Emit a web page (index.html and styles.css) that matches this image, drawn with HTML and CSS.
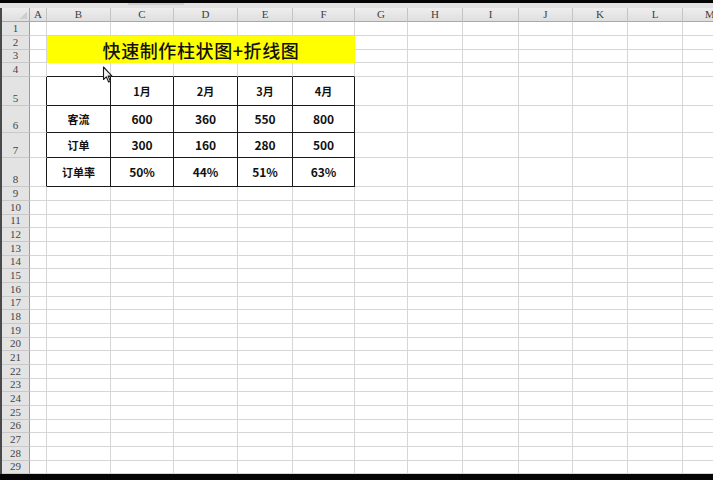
FILE: index.html
```
<!DOCTYPE html>
<html lang="zh">
<head>
<meta charset="utf-8">
<title>快速制作柱状图+折线图</title>
<link rel="stylesheet" href="styles.css">
</head>
<body>
<div class="topbar"><span class="tab"></span></div>
<div class="sheet">
  <div class="ch corner"></div><div class="ch">A</div><div class="ch">B</div><div class="ch">C</div><div class="ch">D</div><div class="ch">E</div><div class="ch">F</div><div class="ch">G</div><div class="ch">H</div><div class="ch">I</div><div class="ch">J</div><div class="ch">K</div><div class="ch">L</div><div class="ch">M</div>

  <div class="rh">1</div><i class="c"></i><i class="c"></i><i class="c"></i><i class="c"></i><i class="c"></i><i class="c"></i><i class="c"></i><i class="c"></i><i class="c"></i><i class="c"></i><i class="c"></i><i class="c"></i><i class="c"></i>

  <div class="rh">2</div><i class="c"></i><div class="title">快速制作柱状图+折线图</div><i class="c"></i><i class="c"></i><i class="c"></i><i class="c"></i><i class="c"></i><i class="c"></i><i class="c"></i>

  <div class="rh">3</div><i class="c"></i><i class="c"></i><i class="c"></i><i class="c"></i><i class="c"></i><i class="c"></i><i class="c"></i><i class="c"></i>

  <div class="rh">4</div><i class="c"></i><i class="c bt"></i><i class="c bt"></i><i class="c bt"></i><i class="c bt"></i><i class="c bt"></i><i class="c"></i><i class="c"></i><i class="c"></i><i class="c"></i><i class="c"></i><i class="c"></i><i class="c"></i>

  <div class="rh">5</div><i class="c bl"></i><div class="t"></div><div class="t">1月</div><div class="t">2月</div><div class="t">3月</div><div class="t">4月</div><i class="c"></i><i class="c"></i><i class="c"></i><i class="c"></i><i class="c"></i><i class="c"></i><i class="c"></i>

  <div class="rh">6</div><i class="c bl"></i><div class="t">客流</div><div class="t n">600</div><div class="t n">360</div><div class="t n">550</div><div class="t n">800</div><i class="c"></i><i class="c"></i><i class="c"></i><i class="c"></i><i class="c"></i><i class="c"></i><i class="c"></i>

  <div class="rh">7</div><i class="c bl"></i><div class="t">订单</div><div class="t n">300</div><div class="t n">160</div><div class="t n">280</div><div class="t n">500</div><i class="c"></i><i class="c"></i><i class="c"></i><i class="c"></i><i class="c"></i><i class="c"></i><i class="c"></i>

  <div class="rh">8</div><i class="c bl"></i><div class="t">订单率</div><div class="t n">50%</div><div class="t n">44%</div><div class="t n">51%</div><div class="t n">63%</div><i class="c"></i><i class="c"></i><i class="c"></i><i class="c"></i><i class="c"></i><i class="c"></i><i class="c"></i>

  <div class="rh">9</div><i class="c"></i><i class="c"></i><i class="c"></i><i class="c"></i><i class="c"></i><i class="c"></i><i class="c"></i><i class="c"></i><i class="c"></i><i class="c"></i><i class="c"></i><i class="c"></i><i class="c"></i>
  <div class="rh">10</div><i class="c"></i><i class="c"></i><i class="c"></i><i class="c"></i><i class="c"></i><i class="c"></i><i class="c"></i><i class="c"></i><i class="c"></i><i class="c"></i><i class="c"></i><i class="c"></i><i class="c"></i>
  <div class="rh">11</div><i class="c"></i><i class="c"></i><i class="c"></i><i class="c"></i><i class="c"></i><i class="c"></i><i class="c"></i><i class="c"></i><i class="c"></i><i class="c"></i><i class="c"></i><i class="c"></i><i class="c"></i>
  <div class="rh">12</div><i class="c"></i><i class="c"></i><i class="c"></i><i class="c"></i><i class="c"></i><i class="c"></i><i class="c"></i><i class="c"></i><i class="c"></i><i class="c"></i><i class="c"></i><i class="c"></i><i class="c"></i>
  <div class="rh">13</div><i class="c"></i><i class="c"></i><i class="c"></i><i class="c"></i><i class="c"></i><i class="c"></i><i class="c"></i><i class="c"></i><i class="c"></i><i class="c"></i><i class="c"></i><i class="c"></i><i class="c"></i>
  <div class="rh">14</div><i class="c"></i><i class="c"></i><i class="c"></i><i class="c"></i><i class="c"></i><i class="c"></i><i class="c"></i><i class="c"></i><i class="c"></i><i class="c"></i><i class="c"></i><i class="c"></i><i class="c"></i>
  <div class="rh">15</div><i class="c"></i><i class="c"></i><i class="c"></i><i class="c"></i><i class="c"></i><i class="c"></i><i class="c"></i><i class="c"></i><i class="c"></i><i class="c"></i><i class="c"></i><i class="c"></i><i class="c"></i>
  <div class="rh">16</div><i class="c"></i><i class="c"></i><i class="c"></i><i class="c"></i><i class="c"></i><i class="c"></i><i class="c"></i><i class="c"></i><i class="c"></i><i class="c"></i><i class="c"></i><i class="c"></i><i class="c"></i>
  <div class="rh">17</div><i class="c"></i><i class="c"></i><i class="c"></i><i class="c"></i><i class="c"></i><i class="c"></i><i class="c"></i><i class="c"></i><i class="c"></i><i class="c"></i><i class="c"></i><i class="c"></i><i class="c"></i>
  <div class="rh">18</div><i class="c"></i><i class="c"></i><i class="c"></i><i class="c"></i><i class="c"></i><i class="c"></i><i class="c"></i><i class="c"></i><i class="c"></i><i class="c"></i><i class="c"></i><i class="c"></i><i class="c"></i>
  <div class="rh">19</div><i class="c"></i><i class="c"></i><i class="c"></i><i class="c"></i><i class="c"></i><i class="c"></i><i class="c"></i><i class="c"></i><i class="c"></i><i class="c"></i><i class="c"></i><i class="c"></i><i class="c"></i>
  <div class="rh">20</div><i class="c"></i><i class="c"></i><i class="c"></i><i class="c"></i><i class="c"></i><i class="c"></i><i class="c"></i><i class="c"></i><i class="c"></i><i class="c"></i><i class="c"></i><i class="c"></i><i class="c"></i>
  <div class="rh">21</div><i class="c"></i><i class="c"></i><i class="c"></i><i class="c"></i><i class="c"></i><i class="c"></i><i class="c"></i><i class="c"></i><i class="c"></i><i class="c"></i><i class="c"></i><i class="c"></i><i class="c"></i>
  <div class="rh">22</div><i class="c"></i><i class="c"></i><i class="c"></i><i class="c"></i><i class="c"></i><i class="c"></i><i class="c"></i><i class="c"></i><i class="c"></i><i class="c"></i><i class="c"></i><i class="c"></i><i class="c"></i>
  <div class="rh">23</div><i class="c"></i><i class="c"></i><i class="c"></i><i class="c"></i><i class="c"></i><i class="c"></i><i class="c"></i><i class="c"></i><i class="c"></i><i class="c"></i><i class="c"></i><i class="c"></i><i class="c"></i>
  <div class="rh">24</div><i class="c"></i><i class="c"></i><i class="c"></i><i class="c"></i><i class="c"></i><i class="c"></i><i class="c"></i><i class="c"></i><i class="c"></i><i class="c"></i><i class="c"></i><i class="c"></i><i class="c"></i>
  <div class="rh">25</div><i class="c"></i><i class="c"></i><i class="c"></i><i class="c"></i><i class="c"></i><i class="c"></i><i class="c"></i><i class="c"></i><i class="c"></i><i class="c"></i><i class="c"></i><i class="c"></i><i class="c"></i>
  <div class="rh">26</div><i class="c"></i><i class="c"></i><i class="c"></i><i class="c"></i><i class="c"></i><i class="c"></i><i class="c"></i><i class="c"></i><i class="c"></i><i class="c"></i><i class="c"></i><i class="c"></i><i class="c"></i>
  <div class="rh">27</div><i class="c"></i><i class="c"></i><i class="c"></i><i class="c"></i><i class="c"></i><i class="c"></i><i class="c"></i><i class="c"></i><i class="c"></i><i class="c"></i><i class="c"></i><i class="c"></i><i class="c"></i>
  <div class="rh">28</div><i class="c"></i><i class="c"></i><i class="c"></i><i class="c"></i><i class="c"></i><i class="c"></i><i class="c"></i><i class="c"></i><i class="c"></i><i class="c"></i><i class="c"></i><i class="c"></i><i class="c"></i>
  <div class="rh">29</div><i class="c"></i><i class="c"></i><i class="c"></i><i class="c"></i><i class="c"></i><i class="c"></i><i class="c"></i><i class="c"></i><i class="c"></i><i class="c"></i><i class="c"></i><i class="c"></i><i class="c"></i>
</div>
<svg class="cursor" width="12" height="18" viewBox="0 0 12 18" aria-hidden="true">
  <path d="M1.5 1 L1.5 13.5 L4.3 10.8 L6.6 16 L8.4 15.2 L6.1 10.1 L10 10.1 Z" fill="#f4f4f4" stroke="#1a1a1a" stroke-width="1.1" stroke-linejoin="round"/>
</svg>
</body>
</html>
```
FILE: styles.css
```
* { box-sizing: border-box; }
html, body {
  margin: 0;
  padding: 0;
  width: 713px;
  height: 480px;
  overflow: hidden;
  background: #050505;
}
body { position: relative; }

.topbar {
  height: 8px;
  border-top: 3px solid #050505;
  background: #e2e2e2;
  position: relative;
}
.topbar .tab {
  display: block;
  margin-left: 128px;
  width: 56px;
  height: 2px;
  background: #cdcdcd;
}

.sheet {
  width: 713px;
  overflow: hidden;
  display: grid;
  border-left: 2px solid #4a4a4a;
  grid-template-columns: 28px 17px 64px 63px 64px 55px 62px 53px 55px 56px 54px 55px 55px 55px;
  grid-template-rows: 14px 14px 14px 13px 14px 29px 27px 25px 29px repeat(7, 14px 14px 13px);
  background: #ffffff;
  font-family: "Liberation Serif", "DejaVu Serif", serif;
}

.ch {
  background: linear-gradient(#eeeeee, #dfdfdf);
  border-right: 1px solid #c4c4c4;
  border-bottom: 1px solid #a9a9a9;
  font-size: 11px;
  color: #404040;
  display: flex;
  align-items: center;
  justify-content: center;
  line-height: 1;
}
.corner {
  background:
    linear-gradient(135deg, transparent 62%, #cfcfcf 62%) no-repeat 14px 3px / 11px 8px,
    linear-gradient(#eeeeee, #dfdfdf);
  border-right: 1px solid #a9a9a9;
}

.rh {
  background: #e3e3e3;
  border-right: 1px solid #9c9c9c;
  border-bottom: 1px solid #c8c8c8;
  font-size: 11px;
  color: #454545;
  display: flex;
  align-items: flex-end;
  justify-content: center;
  line-height: 12px;
  padding-bottom: 1px;
}

.c {
  display: block;
  border-right: 1px solid #d6d6d6;
  border-bottom: 1px solid #d6d6d6;
}
.c.bt { border-bottom-color: #1a1a1a; }
.c.bl { border-right-color: #1a1a1a; }

.title {
  grid-column: span 5;
  grid-row: span 2;
  background: #ffff00;
  display: flex;
  align-items: center;
  justify-content: center;
  font-family: "Noto Sans CJK SC", "Noto Sans", sans-serif;
  font-size: 18px;
  font-weight: 500;
  letter-spacing: 0.6px;
  color: #111111;
  padding-top: 1px;
}

.t {
  border-right: 1px solid #1a1a1a;
  border-bottom: 1px solid #1a1a1a;
  display: flex;
  align-items: center;
  justify-content: center;
  font-family: "Noto Sans CJK SC", "Noto Sans", sans-serif;
  font-weight: 700;
  font-size: 11px;
  color: #111111;
  line-height: 1;
}
.t.n { font-size: 12px; }

.cursor {
  position: absolute;
  left: 102px;
  top: 66px;
}
```
